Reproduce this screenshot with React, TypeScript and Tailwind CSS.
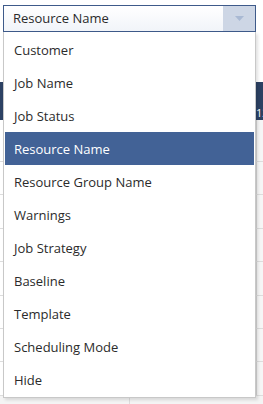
const items = [
  'Customer',
  'Job Name',
  'Job Status',
  'Resource Name',
  'Resource Group Name',
  'Warnings',
  'Job Strategy',
  'Baseline',
  'Template',
  'Scheduling Mode',
  'Hide',
]

const selected = 'Resource Name'

function GridRow({ h }: { h: string }) {
  return (
    <div className={`flex ${h} border-b border-[#dddddd]`}>
      <div className="w-[130px] border-r border-[#e4e4e4]"></div>
      <div className="flex-1"></div>
      <div className="w-[7px] bg-[#f6f6f6] border-l border-[#d4d4d4]"></div>
    </div>
  )
}

export default function App() {
  return (
    <div className="relative w-[263px] h-[404px] overflow-hidden bg-white font-['Open_Sans',sans-serif] text-[13px]">
      {/* grid behind the dropdown */}
      <div className="flex flex-col">
        <div className="h-[82px] bg-white"></div>
        <div className="h-[38px] bg-[#2c4163] flex items-end justify-end text-white text-[11px] leading-none pb-[2px]">
          <span className="w-[7px] overflow-hidden">12</span>
        </div>
        <GridRow h="h-[42px]" />
        <GridRow h="h-[33px]" />
        <GridRow h="h-[34px]" />
        <GridRow h="h-[33px]" />
        <GridRow h="h-[34px]" />
        <GridRow h="h-[33px]" />
        <GridRow h="h-[33px]" />
        <GridRow h="h-[34px]" />
        <div className="flex h-[10px] bg-[#f4f4f4]">
          <div className="w-[130px] border-r border-[#dcdcdc]"></div>
        </div>
      </div>

      {/* combo box + open list */}
      <div className="absolute left-[3px] top-[5px] w-[253px]">
        <div className="flex h-[27px] items-stretch border border-[#3e5a8a] bg-gradient-to-b from-white to-[#f1f4f9]">
          <div className="flex-1 flex items-center pl-[9px] text-[#2b2b2b]">{selected}</div>
          <div className="w-[32px] bg-[#cdd6e5] flex items-center justify-center">
            <svg width="9" height="5" viewBox="0 0 9 5">
              <path d="M0 0 L9 0 L4.5 5 Z" fill="#a9b9d3" />
            </svg>
          </div>
        </div>
        <div className="w-[253px] border border-t-0 border-[#c8c8c8] bg-white p-[1px] shadow-[2px_2px_3px_rgba(0,0,0,0.12)]">
          {items.map((item) => (
            <div
              key={item}
              className={
                item === selected
                  ? 'h-[33px] flex items-center pl-[9px] pt-[2px] bg-[#426296] text-white'
                  : 'h-[33px] flex items-center pl-[9px] pt-[2px] text-[#2b2b2b]'
              }
            >
              {item}
            </div>
          ))}
        </div>
      </div>
    </div>
  )
}
